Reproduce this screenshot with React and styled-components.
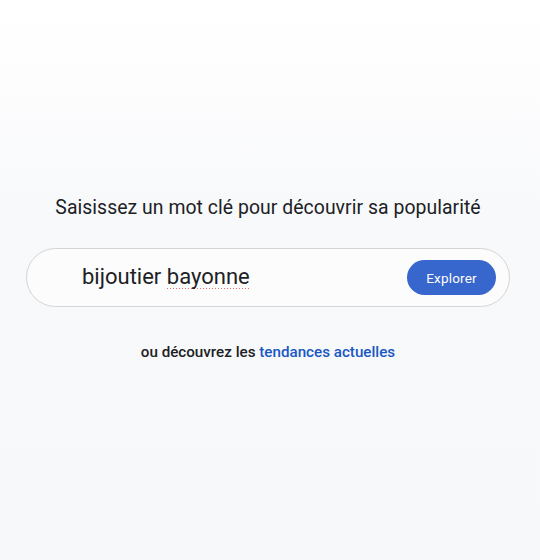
import React from "react";
import styled, { createGlobalStyle } from "styled-components";

const Global = createGlobalStyle`
  html, body { margin: 0; padding: 0; }
  body { font-family: "Roboto", "Open Sans", sans-serif; }
`;

const Page = styled.div`
  width: 540px;
  height: 560px;
  box-sizing: border-box;
  background: linear-gradient(180deg, #ffffff 0px, #fdfdfe 90px, #f8f9fb 200px, #f7f8fa 560px);
  display: flex;
  flex-direction: column;
  align-items: center;
  padding: 195px 4px 0 0;
`;

const Title = styled.h1`
  margin: 0;
  font-family: "Roboto", sans-serif;
  font-weight: 400;
  font-size: 19.4px;
  line-height: 25px;
  color: #202124;
  letter-spacing: 0.05px;
`;

const SearchBox = styled.div`
  margin-top: 28px;
  width: 484px;
  height: 59px;
  box-sizing: border-box;
  border: 1px solid #d4d4d6;
  border-radius: 30px;
  background: #fcfcfc;
  display: flex;
  align-items: center;
  justify-content: space-between;
  padding: 0 13px 0 55px;
`;

const Query = styled.span`
  font-family: "Roboto", sans-serif;
  font-size: 22px;
  color: #202124;
  line-height: 26px;
  padding-bottom: 2px;
`;

const Misspelled = styled.span`
  display: inline-block;
  line-height: 22px;
  padding-bottom: 1px;
  background-image: linear-gradient(90deg, #e86a6a 50%, transparent 50%);
  background-size: 3px 1px;
  background-repeat: repeat-x;
  background-position: 0 100%;
`;

const Button = styled.button`
  width: 89px;
  height: 35px;
  border: none;
  border-radius: 18px;
  background: #3766cc;
  color: #ffffff;
  font-family: "Roboto", sans-serif;
  font-size: 13.5px;
  font-weight: 400;
  letter-spacing: 0.2px;
  padding: 0;
`;

const Hint = styled.p`
  margin: 35px 0 0;
  font-family: "Roboto", sans-serif;
  font-size: 15.2px;
  font-weight: 500;
  color: #202124;
  line-height: 20px;
`;

const Link = styled.a`
  color: #1a57c2;
  text-decoration: none;
`;

export default function App() {
  return (
    <>
      <Global />
      <Page>
        <Title>Saisissez un mot clé pour découvrir sa popularité</Title>
        <SearchBox>
          <Query>
            bijoutier <Misspelled>bayonne</Misspelled>
          </Query>
          <Button>Explorer</Button>
        </SearchBox>
        <Hint>
          ou découvrez les <Link href="#">tendances actuelles</Link>
        </Hint>
      </Page>
    </>
  );
}
